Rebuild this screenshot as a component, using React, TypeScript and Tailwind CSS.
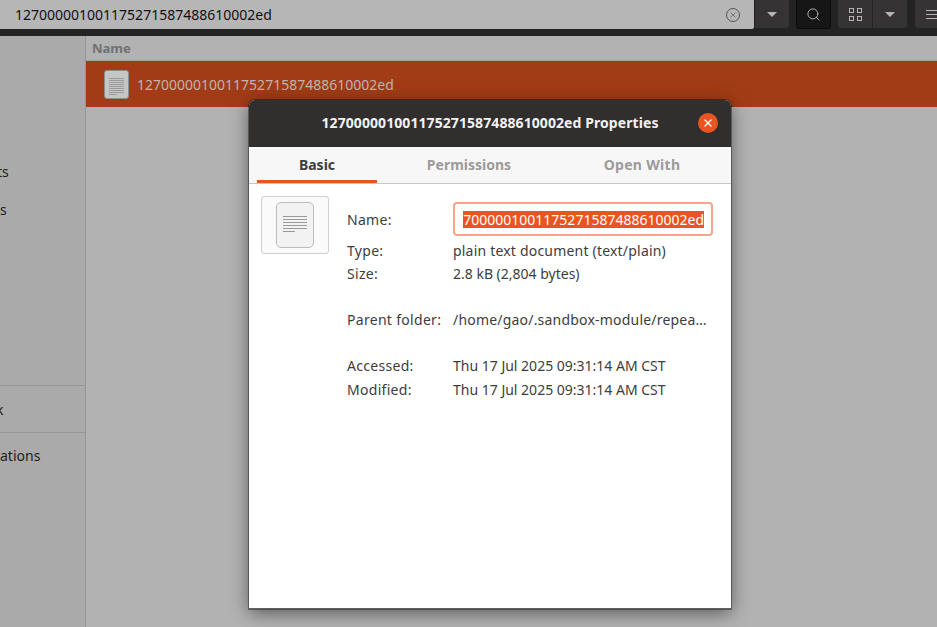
import { Search, X } from "lucide-react";

const FILE_NAME = "127000001001175271587488610002ed";

const font = "font-['Noto_Sans',sans-serif]";

const Caret = () => (
  <span className="h-0 w-0 border-x-[5px] border-t-[5px] border-x-transparent border-t-[#b5b5b5]" />
);

const DocIcon = ({ small }: { small?: boolean }) => {
  const lines = small ? [0, 1, 2, 3, 4, 5, 6, 7, 8] : [0, 1, 2, 3, 4, 5];
  return (
    <div
      className={
        small
          ? "flex h-[29px] w-[25px] flex-col items-start gap-px rounded-[3px] border border-[#8e8e8e] bg-[#c6c6c6] px-1 pt-[7px]"
          : "flex h-[46px] w-[38px] flex-col items-start gap-[2px] rounded-[5px] border border-[#bdbdbd] bg-[#f2f2f2] px-[6px] pt-[13px]"
      }
    >
      {lines.map((i) => (
        <span
          key={i}
          className={`h-px ${i === lines.length - 1 ? "w-1/2" : "w-full"} ${small ? "bg-[#9a9a9a]" : "bg-[#9a9a9a]"}`}
        />
      ))}
    </div>
  );
};

const InfoRow = ({
  label,
  value,
  className,
  valueClass,
}: {
  label: string;
  value: string;
  className?: string;
  valueClass?: string;
}) => (
  <div className={`flex h-[23px] items-center ${className ?? ""}`}>
    <span className="w-[106px] shrink-0 text-[14px] tracking-[0.3px] text-[#3d3d3d]">{label}</span>
    <span className={`whitespace-nowrap text-[14px] text-[#3d3d3d] ${valueClass ?? ""}`}>{value}</span>
  </div>
);

const Toolbar = () => (
  <div className="flex h-[36px] shrink-0 bg-[#232323] pb-[7px]">
    <div className="flex w-[754px] items-center rounded-br-[2px] bg-[#b6b6b6] pl-[15px] pr-[14px]">
      <span className="flex-1 text-[14px] text-[#111]">{FILE_NAME}</span>
      <span className="flex h-[14px] w-[14px] items-center justify-center rounded-full border border-[#555]">
        <X size={8} strokeWidth={2} className="text-[#555]" />
      </span>
    </div>
    <div className="ml-px flex h-[28px] w-[34px] items-center justify-center rounded-br-[3px] bg-[#353333]">
      <Caret />
    </div>
    <div className="ml-[7px] flex h-[29px] w-[35px] items-center justify-center rounded-b-[3px] border border-t-0 border-[#0c0c0c] bg-[#161616]">
      <Search size={15} strokeWidth={1.5} className="text-[#b5b5b5]" />
    </div>
    <div className="ml-[7px] flex h-[28px] w-[69px] rounded-b-[3px] bg-[#353333]">
      <div className="flex w-[35px] items-center justify-center border-r border-[#232323]">
        <div className="grid grid-cols-2 gap-[3px]">
          <span className="h-[5px] w-[5px] border border-[#b5b5b5]" />
          <span className="h-[5px] w-[5px] border border-[#b5b5b5]" />
          <span className="h-[5px] w-[5px] border border-[#b5b5b5]" />
          <span className="h-[5px] w-[5px] border border-[#b5b5b5]" />
        </div>
      </div>
      <div className="flex flex-1 items-center justify-center">
        <Caret />
      </div>
    </div>
    <div className="ml-2 flex h-[28px] flex-1 flex-col justify-center gap-[3px] rounded-bl-[3px] bg-[#353333] pl-[11px]">
      <span className="h-px w-full bg-[#b5b5b5]" />
      <span className="h-px w-full bg-[#b5b5b5]" />
      <span className="h-px w-full bg-[#b5b5b5]" />
    </div>
  </div>
);

const Sidebar = () => (
  <aside className="flex w-[86px] shrink-0 flex-col border-r border-[#969696] bg-[#aaaaaa] text-[14px] text-[#1c1c1c]">
    <div className="h-[116px]" />
    <div className="flex h-[38px] items-center">
      <span className="-ml-[3px]">ts</span>
    </div>
    <div className="flex h-[38px] items-center">s</div>
    <div className="h-[157px]" />
    <div className="flex h-[47px] items-center border-t border-[#979797]">
      <span className="-ml-[4px]">k</span>
    </div>
    <div className="flex h-[47px] items-center border-t border-[#979797] pb-[2px]">ations</div>
  </aside>
);

const FileList = () => (
  <main className="flex-1 bg-[#b2b2b2]">
    <div className="flex h-[25px] items-center border-b border-[#a2a2a2] pl-[6px] pt-[2px] text-[13px] font-bold text-[#717171]">
      Name
    </div>
    <div className="flex h-[46px] items-center bg-[#a23c16] pl-[18px]">
      <DocIcon small />
      <span className="ml-[8px] text-[14px] text-[#bbb5b1]">{FILE_NAME}</span>
    </div>
  </main>
);

const PropertiesDialog = () => (
  <div className="absolute left-[249px] top-[100px] flex h-[509px] w-[482px] flex-col overflow-hidden rounded-t-[6px] border-b border-[#5f5f5f] bg-white shadow-[0_0_0_1px_rgba(0,0,0,0.35),0_4px_18px_rgba(0,0,0,0.5)]">
    <div className="relative flex h-[47px] shrink-0 items-center justify-center bg-[#312e2e] pb-[2px] text-[14px] font-bold tracking-[0.08px] text-[#f2f2f2]">
      {FILE_NAME} Properties
      <span className="absolute left-[449px] top-[13px] flex h-5 w-5 items-center justify-center rounded-full bg-[#e95420]">
        <X size={12} strokeWidth={2.5} className="text-white" />
      </span>
    </div>
    <div className="flex h-[37px] shrink-0 border-b border-[#c6c6c6] bg-[#f7f7f7] px-2 text-[14px] font-bold text-[#9b9b9b]">
      <div className="flex w-[120px] items-center justify-center border-b-[3px] border-[#e95420] pt-[1px] text-[#3d3d3d]">
        Basic
      </div>
      <div className="flex w-[184px] items-center justify-center pb-[2px]">Permissions</div>
      <div className="flex flex-1 items-center justify-center pb-[2px] tracking-[0.3px]">Open With</div>
    </div>
    <div className="flex pl-3 pt-3">
      <div className="flex h-[58px] w-[68px] shrink-0 items-center justify-center rounded-[3px] border border-[#cfcfcf] bg-[#fafafa]">
        <DocIcon />
      </div>
      <div className="ml-[18px] w-[366px] pt-[6px]">
        <div className="flex h-[34px] items-center">
          <span className="w-[106px] shrink-0 text-[14px] tracking-[0.3px] text-[#3d3d3d]">Name:</span>
          <div className="flex h-[34px] w-[260px] items-center justify-end overflow-hidden rounded-[4px] border-2 border-[#f4a58c] bg-white pr-[7px]">
            <span className="whitespace-nowrap bg-[#e95420] text-[14px] leading-[17px] text-white">
              7000001001175271587488610002ed
            </span>
          </div>
        </div>
        <InfoRow
          label="Type:"
          value="plain text document (text/plain)"
          className="mt-[3px]"
          valueClass="tracking-[0.2px]"
        />
        <InfoRow label="Size:" value="2.8 kB (2,804 bytes)" />
        <InfoRow
          label="Parent folder:"
          value="/home/gao/.sandbox-module/repea…"
          className="mt-[23px]"
          valueClass="tracking-[0.2px]"
        />
        <InfoRow label="Accessed:" value="Thu 17 Jul 2025 09:31:14 AM CST" className="mt-[23px]" />
        <InfoRow label="Modified:" value="Thu 17 Jul 2025 09:31:14 AM CST" className="mt-[1px]" />
      </div>
    </div>
  </div>
);

export default function App() {
  return (
    <div className={`relative flex h-[627px] w-[937px] flex-col overflow-hidden bg-[#b2b2b2] ${font}`}>
      <Toolbar />
      <div className="flex flex-1">
        <Sidebar />
        <FileList />
      </div>
      <PropertiesDialog />
    </div>
  );
}
